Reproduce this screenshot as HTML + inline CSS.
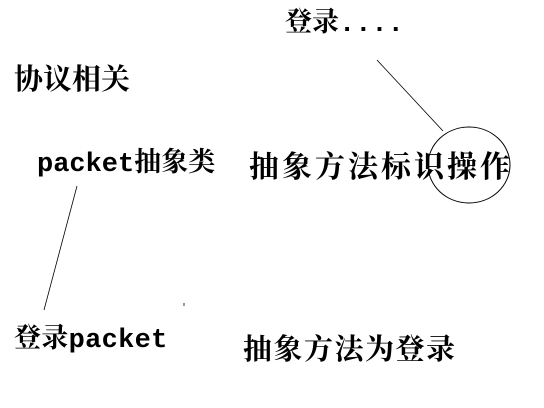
<!DOCTYPE html>
<html><head><meta charset="utf-8"><style>
body{margin:0;width:544px;height:408px;background:#fff;position:relative;overflow:hidden;font-family:"Liberation Mono","Noto Serif CJK SC",serif;font-weight:bold;color:#000}
.t{position:absolute;white-space:nowrap;line-height:1}
</style></head><body>
<div class="t" style="left:285px;top:12px;font-size:27px">登录....</div>
<div class="t" style="left:14px;top:67px;font-size:29px">协议相关</div>
<div class="t" style="left:37px;top:152px;font-size:27px">packet抽象类</div>
<div class="t" style="left:249px;top:155px;font-size:30px;letter-spacing:3px">抽象方法标识操作</div>
<div class="t" style="left:14px;top:328px;font-size:27px;letter-spacing:0.3px">登录packet</div>
<div class="t" style="left:243px;top:337px;font-size:29px;letter-spacing:1.5px">抽象方法为登录</div>
<svg width="544" height="408" style="position:absolute;left:0;top:0">
<line x1="377" y1="60" x2="443" y2="131" stroke="#000" stroke-width="0.8"/>
<ellipse cx="469" cy="165" rx="41" ry="38" fill="none" stroke="#000" stroke-width="1"/>
<line x1="77" y1="186" x2="44" y2="310" stroke="#000" stroke-width="0.8"/>
<line x1="184" y1="303" x2="184" y2="306" stroke="#000" stroke-width="0.8"/>
</svg>
</body></html>
